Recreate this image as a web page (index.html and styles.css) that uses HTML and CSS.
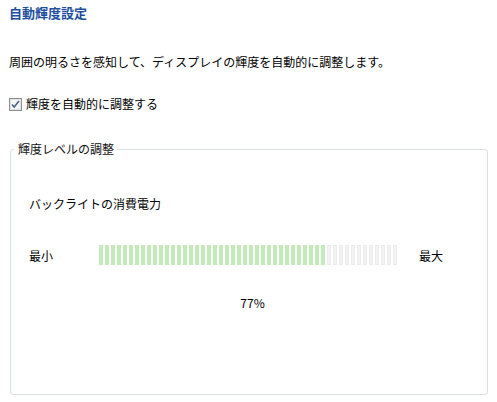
FILE: index.html
```html
<!DOCTYPE html>
<html lang="ja">
<head>
<meta charset="utf-8">
<link rel="stylesheet" href="styles.css">
</head>
<body>
<div class="page">
  <h1 class="title">自動輝度設定</h1>
  <p class="desc">周囲の明るさを感知して、ディスプレイの輝度を自動的に調整します。</p>
  <label class="check">
    <span class="box"><svg width="13" height="13" viewBox="0 0 13 13"><rect x="0.5" y="0.5" width="12" height="12" fill="#f4f4f4" stroke="#8e8f8f"/><rect x="1.5" y="1.5" width="10" height="10" fill="none" stroke="#e2e3ea"/><path d="M3 6.5 L5.2 9 L10 3" fill="none" stroke="#4d6185" stroke-width="1.6"/></svg></span>
    <span>輝度を自動的に調整する</span>
  </label>
  <fieldset class="group">
    <legend class="legend">輝度レベルの調整</legend>
    <div class="inner">
      <div class="caption">バックライトの消費電力</div>
      <div class="slider-row">
        <span class="lbl">最小</span>
        <div class="bar">
          <i class="on"></i><i class="on"></i><i class="on"></i><i class="on"></i><i class="on"></i><i class="on"></i><i class="on"></i><i class="on"></i><i class="on"></i><i class="on"></i>
          <i class="on"></i><i class="on"></i><i class="on"></i><i class="on"></i><i class="on"></i><i class="on"></i><i class="on"></i><i class="on"></i><i class="on"></i><i class="on"></i>
          <i class="on"></i><i class="on"></i><i class="on"></i><i class="on"></i><i class="on"></i><i class="on"></i><i class="on"></i><i class="on"></i><i class="on"></i><i class="on"></i>
          <i class="on"></i><i class="on"></i><i class="on"></i><i class="on"></i><i class="on"></i><i class="on"></i><i class="on"></i><i class="on"></i>
          <i></i><i></i><i></i><i></i><i></i><i></i><i></i><i></i><i></i><i></i><i></i><i></i>
        </div>
        <span class="lbl max">最大</span>
      </div>
      <div class="pct">77%</div>
    </div>
  </fieldset>
</div>
</body>
</html>
```
FILE: styles.css
```css
html, body {
  margin: 0;
  padding: 0;
  background: #ffffff;
}
body {
  font-family: "Noto Sans CJK JP", "Noto Sans", sans-serif;
  font-size: 12px;
  color: #000;
}
.page {
  padding: 4px 9px 0 9px;
  display: flex;
  flex-direction: column;
}
.title {
  margin: 0;
  font-size: 13px;
  line-height: 18px;
  font-weight: bold;
  color: #1e4f9f;
}
.desc {
  margin: 31px 0 0 0;
  line-height: 18px;
}
.check {
  margin-top: 24px;
  display: flex;
  align-items: center;
  gap: 4px;
  line-height: 18px;
}
.box {
  display: flex;
  width: 13px;
  height: 13px;
}
.group {
  margin: 28px 0 0 1px;
  padding: 0;
  border: 1px solid #d6dfe6;
  border-radius: 3px;
  min-width: 0;
}
.legend {
  margin-left: 3px;
  padding: 0 3px 0 4px;
  line-height: 16px;
  color: #111;
}
.inner {
  padding: 38px 0 82px 18px;
}
.caption {
  line-height: 18px;
}
.slider-row {
  margin-top: 32px;
  display: grid;
  grid-template-columns: 48px 298px auto;
  column-gap: 22px;
  align-items: center;
  height: 20px;
}
.lbl {
  line-height: 18px;
  position: relative;
  top: 1px;
}
.bar {
  display: flex;
  gap: 2px;
  height: 20px;
}
.bar i {
  display: block;
  width: 4px;
  height: 20px;
  background: #f3f3f3;
  box-shadow: inset 0 0 0 1px #ececec;
}
.bar i.on {
  background: #c4eab9;
  box-shadow: none;
}
.pct {
  margin-top: 29px;
  line-height: 18px;
  text-align: center;
  padding-right: 11px;
}
```
